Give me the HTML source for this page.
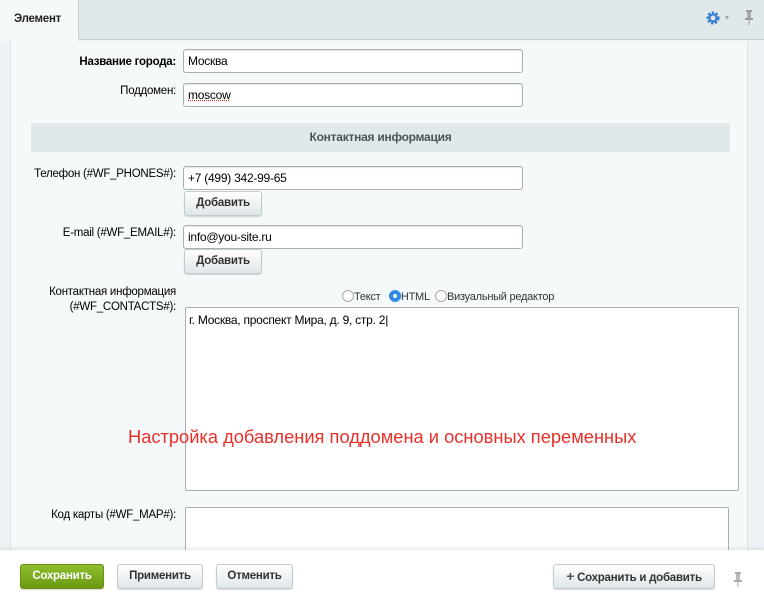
<!DOCTYPE html>
<html><head><meta charset="utf-8"><style>
*{box-sizing:border-box;margin:0;padding:0}
body{width:764px;height:600px;overflow:hidden;background:#eef2f4;font-family:"Liberation Sans",Arial,sans-serif;font-size:12px;color:#000;position:relative;letter-spacing:-0.25px}
.top{position:absolute;left:0;top:0;width:764px;height:40px;background:#e1e8ea;border-bottom:1px solid #c9d0d3}
.tab{position:absolute;left:0;top:0;width:79px;height:41px;background:#f5f9f9;border-right:1px solid #cdd3d6;font-size:11.5px;line-height:38px;padding-left:14px;color:#222;font-weight:bold}
.panel{position:absolute;left:10px;top:41px;width:738px;height:520px;background:#f5f9f9;border-left:1px solid #dfe5e7;border-right:1px solid #dfe5e7}
.lbl{position:absolute;right:588px;text-align:right;font-size:11.5px;color:#000;line-height:15px}
.inp{position:absolute;left:183px;width:340px;height:24px;background:#fff;border:1px solid #a8b0b4;border-radius:3px;box-shadow:inset 0 1px 1px rgba(0,0,0,.1);font-size:12px;line-height:22px;padding-left:4px}
.btn{position:absolute;height:25px;border:1px solid #c3cbce;border-radius:3px;background:linear-gradient(#fff,#dfe6e9);font-weight:bold;font-size:11.5px;color:#333;text-align:center;line-height:23px;box-shadow:0 1px 1px rgba(0,0,0,.15)}
.sect{position:absolute;left:31px;top:123px;width:699px;height:29px;background:#e0e8ea;text-align:center;line-height:29px;font-weight:bold;color:#4b5459;font-size:12px}
.ta{position:absolute;left:185px;width:554px;background:#fff;border:1px solid #a8b0b4;border-radius:2px}
.foot{position:absolute;left:0;top:550px;width:764px;height:50px;background:#fff;box-shadow:0 -2px 4px rgba(0,0,0,.08)}
.radio{display:inline-block;width:12px;height:12px;border:1px solid #aaa;border-radius:50%;vertical-align:-2px;background:#fff}
</style></head><body>
<div class="top"></div>
<div class="tab">Элемент</div>
<svg style="position:absolute;left:706px;top:11px" width="14" height="14" viewBox="0 0 14 14"><circle cx="7" cy="7" r="5" fill="none" stroke="#2f7bd2" stroke-width="3" stroke-dasharray="2.2 1.5"/><circle cx="7" cy="7" r="3.5" fill="none" stroke="#2f7bd2" stroke-width="2"/></svg>
<div style="position:absolute;left:725px;top:13px;color:#9aa;font-size:8px">▾</div>
<svg style="position:absolute;left:744px;top:9px" width="10" height="16" viewBox="0 0 10 16"><rect x="2" y="1" width="6" height="2" fill="#999"/><rect x="3" y="3" width="4" height="6" fill="#aaa"/><rect x="1" y="9" width="8" height="2" fill="#999"/><rect x="4.5" y="11" width="1" height="5" fill="#999"/></svg>
<div class="panel"></div>
<div class="lbl" style="top:55px;font-weight:bold">Название города:</div>
<div class="inp" style="top:49px">Москва</div>
<div class="lbl" style="top:84px">Поддомен:</div>
<div class="inp" style="top:83px"><span style="text-decoration:underline dotted #d33">moscow</span></div>
<div class="sect">Контактная информация</div>
<div class="lbl" style="top:167px">Телефон (#WF_PHONES#):</div>
<div class="inp" style="top:166px">+7 (499) 342-99-65</div>
<div class="btn" style="left:184px;top:191px;width:78px">Добавить</div>
<div class="lbl" style="top:226px">E-mail (#WF_EMAIL#):</div>
<div class="inp" style="top:225px">info@you-site.ru</div>
<div class="btn" style="left:184px;top:249px;width:78px">Добавить</div>
<div class="lbl" style="top:285px">Контактная информация<br>(#WF_CONTACTS#):</div>
<div style="position:absolute;left:342px;top:290px;font-size:11px;color:#333"><span class="radio"></span>Текст &nbsp;&nbsp;<span class="radio" style="background:#2f8ae6;border-color:#2f8ae6;box-shadow:inset 0 0 0 3px #2f8ae6,inset 0 0 0 6px #fff"></span>HTML &nbsp;<span class="radio"></span>Визуальный редактор</div>
<div class="ta" style="top:307px;height:184px;padding:5px 3px;font-size:12px">г. Москва, проспект Мира, д. 9, стр. 2|</div>
<div style="position:absolute;left:128px;top:426px;color:#e8302a;font-size:18.3px;letter-spacing:0">Настройка добавления поддомена и основных переменных</div>
<div class="lbl" style="top:508px">Код карты (#WF_MAP#):</div>
<div class="ta" style="top:507px;height:60px;width:544px"></div>
<div class="foot"></div>
<div class="btn" style="left:20px;top:564px;width:84px;background:linear-gradient(#8fbd2c,#6a9a12);border-color:#6a9018;color:#fff">Сохранить</div>
<div class="btn" style="left:117px;top:564px;width:86px">Применить</div>
<div class="btn" style="left:216px;top:564px;width:77px">Отменить</div>
<div class="btn" style="left:553px;top:564px;width:162px"><b style="font-size:14px;color:#555">+</b> Сохранить и добавить</div>
<svg style="position:absolute;left:733px;top:571px" width="10" height="16" viewBox="0 0 10 16"><rect x="2" y="1" width="6" height="2" fill="#aaa"/><rect x="3" y="3" width="4" height="6" fill="#bbb"/><rect x="1" y="9" width="8" height="2" fill="#aaa"/><rect x="4.5" y="11" width="1" height="5" fill="#aaa"/></svg>
</body></html>
